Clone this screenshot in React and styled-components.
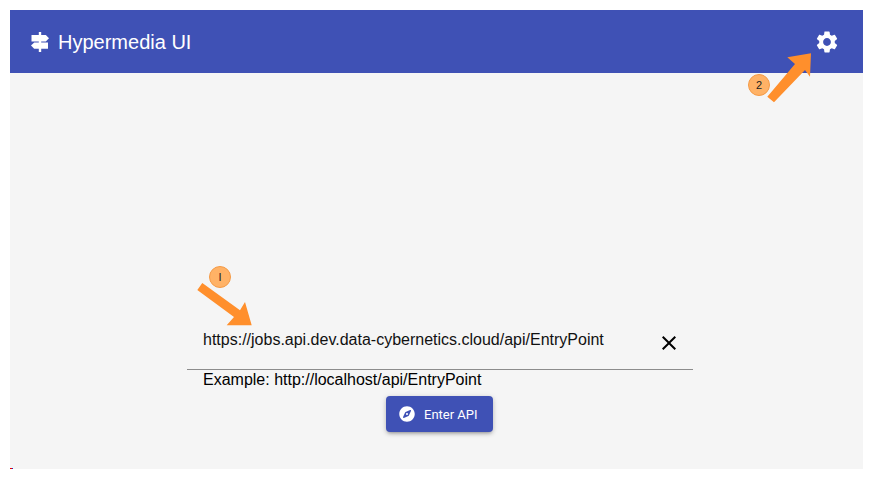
import React from "react";
import styled, { createGlobalStyle } from "styled-components";
import { MdClose, MdSettings } from "react-icons/md";
import { FaCompass } from "react-icons/fa";

const Global = createGlobalStyle`
  html, body { margin: 0; padding: 0; background: #fff; }
  body { font-family: "Liberation Sans", Arial, sans-serif; }
`;

const Page = styled.div`
  position: relative;
  width: 875px;
  height: 480px;
  padding: 10px 12px 11px 10px;
  box-sizing: border-box;
  display: flex;
  flex-direction: column;
  overflow: hidden;
`;

const Toolbar = styled.header`
  height: 63px;
  flex: none;
  background: #3f51b5;
  color: #fff;
  display: flex;
  align-items: center;
  padding: 0 23px 0 21px;
`;

const Brand = styled.div`
  display: flex;
  align-items: center;
  gap: 9px;
  font-size: 20px;
  line-height: 24px;
`;

const Spacer = styled.div`
  flex: 1;
`;

const Main = styled.main`
  flex: 1;
  background: #f5f5f5;
  display: flex;
  justify-content: center;
  padding-top: 247px;
  box-sizing: border-box;
`;

const Form = styled.form`
  width: 506px;
  margin-left: 7px;
  display: flex;
  flex-direction: column;
`;

const Field = styled.div`
  height: 50px;
  display: flex;
  align-items: flex-start;
  border-bottom: 1px solid #8c8c8c;
  padding: 10px 12px 0 16px;
  box-sizing: border-box;
`;

const Value = styled.div`
  flex: 1;
  font-size: 16px;
  line-height: 20px;
  color: #111;
`;

const ClearIcon = styled(MdClose)`
  color: #000;
  margin-top: 1px;
`;

const Hint = styled.div`
  font-size: 16px;
  line-height: 20px;
  color: #000;
  padding-left: 16px;
`;

const Button = styled.button`
  align-self: center;
  margin: 6px 1px 0 0;
  width: 107px;
  height: 36px;
  border: 0;
  border-radius: 4px;
  background: #3f51b5;
  color: #fff;
  display: flex;
  align-items: center;
  gap: 9px;
  padding: 0 0 0 13px;
  font-family: Roboto, sans-serif;
  font-size: 13px;
  box-shadow: 0 3px 3px -2px rgba(0,0,0,.2), 0 2px 4px 0 rgba(0,0,0,.14), 0 1px 6px 0 rgba(0,0,0,.12);
`;

const Annotation = styled.svg`
  position: absolute;
  left: 0;
  top: 0;
  pointer-events: none;
`;

const Badge = styled.div`
  position: absolute;
  left: ${p => p.$x - 11}px;
  top: ${p => p.$y - 11}px;
  width: 22px;
  height: 22px;
  box-sizing: border-box;
  border-radius: 50%;
  background: #ffb266;
  border: 1px solid #f59a45;
  display: flex;
  align-items: center;
  justify-content: center;
  font-family: "Liberation Sans", sans-serif;
  font-size: 11px;
  color: #222;
`;

const Stray = styled.div`
  position: absolute;
  left: 10px;
  top: 468px;
  width: 3px;
  height: 1px;
  background: linear-gradient(90deg, #e00 0 66%, #22c 66%);
`;

const SignpostIcon = () => (
  <svg width="18" height="20" viewBox="0 0 18 20" fill="#fff">
    <rect x="7.8" y="0" width="2.4" height="20" />
    <polygon points="0.5,3 14.8,3 18,6.2 14.8,9.4 0.5,9.4" />
    <polygon points="3.2,10.4 17,10.4 17,16.8 3.2,16.8 0,13.6" />
  </svg>
);

export default function App() {
  return (
    <>
      <Global />
      <Page>
        <Toolbar>
          <Brand>
            <SignpostIcon />
            <span>Hypermedia UI</span>
          </Brand>
          <Spacer />
          <MdSettings size={26} />
        </Toolbar>
        <Main>
          <Form>
            <Field>
              <Value>https://jobs.api.dev.data-cybernetics.cloud/api/EntryPoint</Value>
              <ClearIcon size={24} />
            </Field>
            <Hint>Example: http://localhost/api/EntryPoint</Hint>
            <Button type="button">
              <FaCompass size={16} />
              Enter API
            </Button>
          </Form>
        </Main>
        <Annotation width="875" height="480" viewBox="0 0 875 480">
          <polygon fill="#ff8f2c" points="197.3,290 202.3,283 240,310.3 245,302 251.7,325.3 226.7,325.3 234,317" />
          <polygon fill="#ff8f2c" points="767.3,96.7 774,102.3 805,70 810,76.7 811,53.3 787.3,57.3 795,64" />
        </Annotation>
        <Badge $x={220} $y={277}>I</Badge>
        <Badge $x={759} $y={85}>2</Badge>
        <Stray />
      </Page>
    </>
  );
}
